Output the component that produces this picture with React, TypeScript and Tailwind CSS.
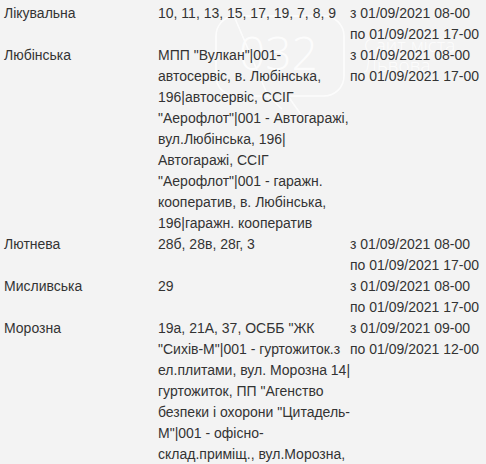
import React from 'react';

type Row = { street: string; houses: string[]; from: string; to: string };

const rows: Row[] = [
  { street: 'Лікувальна', houses: ['10, 11, 13, 15, 17, 19, 7, 8, 9'], from: 'з 01/09/2021 08-00', to: 'по 01/09/2021 17-00' },
  {
    street: 'Любінська',
    houses: [
      'МПП "Вулкан"|001-',
      'автосервіс, в. Любінська,',
      '196|автосервіс, ССІГ',
      '"Аерофлот"|001 - Автогаражі,',
      'вул.Любінська, 196|',
      'Автогаражі, ССІГ',
      '"Аерофлот"|001 - гаражн.',
      'кооператив, в. Любінська,',
      '196|гаражн. кооператив',
    ],
    from: 'з 01/09/2021 08-00',
    to: 'по 01/09/2021 17-00',
  },
  { street: 'Лютнева', houses: ['28б, 28в, 28г, 3'], from: 'з 01/09/2021 08-00', to: 'по 01/09/2021 17-00' },
  { street: 'Мисливська', houses: ['29'], from: 'з 01/09/2021 08-00', to: 'по 01/09/2021 17-00' },
  {
    street: 'Морозна',
    houses: [
      '19а, 21А, 37, ОСББ "ЖК',
      '"Сихів-М"|001 - гуртожиток.з',
      'ел.плитами, вул. Морозна 14|',
      'гуртожиток, ПП "Агенство',
      'безпеки і охорони "Цитадель-',
      'М"|001 - офісно-',
      'склад.приміщ., вул.Морозна,',
      '37',
    ],
    from: 'з 01/09/2021 09-00',
    to: 'по 01/09/2021 12-00',
  },
];

// faint "032" speech-bubble logo behind the table
const Watermark: React.FC = () => (
  <div className="absolute left-[212px] top-[13px] pointer-events-none opacity-80">
    <svg width="140" height="110" viewBox="0 0 140 110" fill="none">
      <path
        d="M22 3 H112 A20 20 0 0 1 132 23 V63 A20 20 0 0 1 112 83 H76 L92 106 M56 83 H24 A20 20 0 0 1 4 63 V23 A20 20 0 0 1 22 3 Z M56 83 L70 96"
        stroke="#ffffff"
        strokeWidth="1.6"
        strokeLinejoin="round"
      />
    </svg>
    <div className="absolute left-[27px] top-[16px] text-[46px] leading-none font-light text-white" style={{ fontFamily: '"Open Sans", sans-serif' }}>
      032
    </div>
    <div className="absolute left-[152px] top-[22px] text-[19px] leading-[20px] font-light text-white whitespace-nowrap" style={{ fontFamily: '"Open Sans", sans-serif' }}>
      Сайт міста
      <br />
      Львова
    </div>
  </div>
);

export default function App() {
  return (
    <div className="relative w-[486px] h-[464px] overflow-hidden bg-[#f3f3f3] text-[#333333] text-[14px] leading-[21px] font-['Liberation_Sans',Arial,sans-serif]">
      <Watermark />
      <table className="relative table-fixed border-collapse w-[486px] mt-[3px]">
        <colgroup>
          <col className="w-[154px]" />
          <col className="w-[196px]" />
          <col className="w-[136px]" />
        </colgroup>
        <tbody>
          {rows.map((r) => (
            <tr key={r.street} className="align-top">
              <td className="pl-[4px] py-0">{r.street}</td>
              <td className="pl-[4px] py-0">
                {r.houses.map((line, i) => (
                  <div key={i} className="whitespace-nowrap">
                    {line}
                  </div>
                ))}
              </td>
              <td className="py-0 whitespace-nowrap">
                {r.from}
                <br />
                {r.to}
              </td>
            </tr>
          ))}
        </tbody>
      </table>
    </div>
  );
}
